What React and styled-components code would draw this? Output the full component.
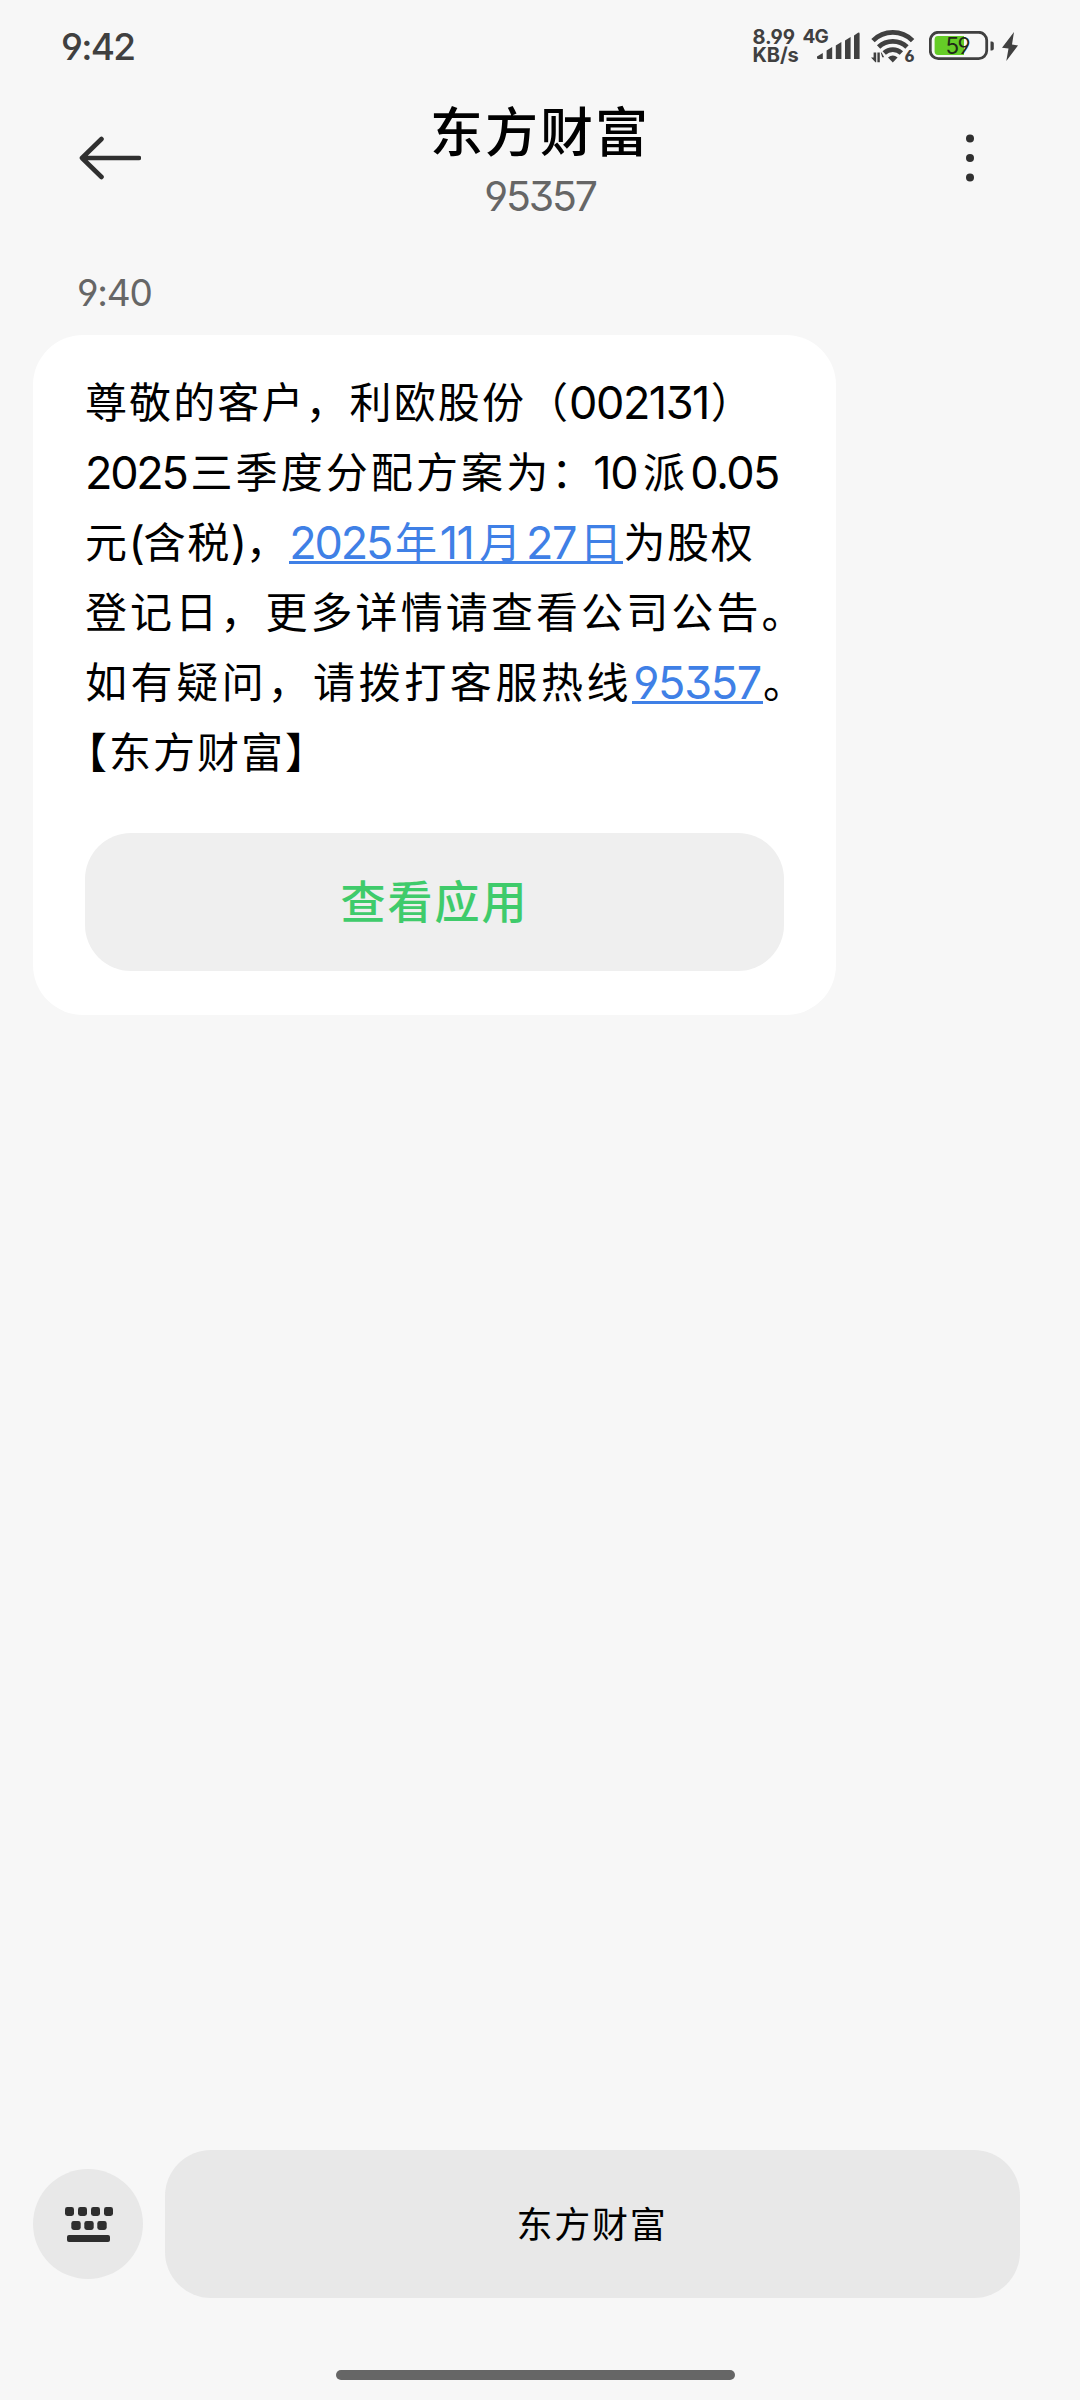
import React from "react";
import styled, { createGlobalStyle } from "styled-components";

const colors = {
  page: "#f7f7f7",
  bubble: "#ffffff",
  control: "#e8e8e8",
  action: "#efefef",
  text: "#000000",
  icon: "#303030",
  status: "#404040",
  muted: "#666666",
  link: "#3f80e6",
  green: "#3fcb6b",
  battery: "#65cc27",
};

const GlobalStyle = createGlobalStyle`
  * {
    box-sizing: border-box;
  }

  body {
    margin: 0;
    background: ${colors.page};
    font-family: Inter, "Noto Sans CJK SC", sans-serif;
    font-feature-settings: "cv03", "cv04", "cv09";
  }
`;

const Screen = styled.div`
  display: flex;
  flex-direction: column;
  width: 1080px;
  height: 2400px;
  background: ${colors.page};
  color: ${colors.text};
`;

const StatusBar = styled.div`
  display: flex;
  align-items: center;
  justify-content: space-between;
  height: 94px;
  padding: 0 62px 2px 61px;
  color: ${colors.status};
`;

const Clock = styled.span`
  font-size: 37px;
  font-weight: 500;
  letter-spacing: -1.7px;
`;

const StatusIcons = styled.div`
  display: flex;
  align-items: center;
`;

const NetSpeed = styled.div`
  width: 50px;
  margin-left: -1px;
  font-size: 20px;
  font-weight: 700;
  line-height: 18px;
  letter-spacing: -0.1px;
`;

const Network = styled.span`
  height: 36px;
  margin-right: -11px;
  font-size: 19px;
  font-weight: 700;
  line-height: 18px;
  letter-spacing: -0.8px;
`;

const StatusGap = styled.span`
  width: ${(props) => props.$width}px;
`;

const Header = styled.header`
  display: flex;
  align-items: center;
  justify-content: space-between;
  height: 130px;
  padding: 0 78px;
`;

const IconButton = styled.button`
  display: flex;
  align-items: center;
  justify-content: center;
  width: 64px;
  height: 64px;
  margin-top: -2px;
  padding: 0;
  border: 0;
  background: none;
`;

const Contact = styled.div`
  display: flex;
  flex-direction: column;
  align-items: center;
  padding-top: 4px;
`;

const ContactName = styled.h1`
  margin: 0;
  font-size: 53px;
  font-weight: 500;
  line-height: 70px;
  letter-spacing: 2px;
`;

const ContactNumber = styled.span`
  font-size: 41px;
  line-height: 56px;
  letter-spacing: -2.2px;
  color: ${colors.muted};
`;

const Thread = styled.main`
  display: flex;
  flex: 1;
  flex-direction: column;
  align-items: flex-start;
  padding: 44px 33px 0;
`;

const Timestamp = styled.time`
  height: 67px;
  margin-left: 44px;
  font-size: 37px;
  line-height: 49px;
  letter-spacing: -1.2px;
  color: ${colors.muted};
`;

const Bubble = styled.section`
  display: flex;
  flex-direction: column;
  width: 803px;
  height: 680px;
  padding: 33px 52px 44px;
  border-radius: 50px;
  background: ${colors.bubble};
`;

const Line = styled.div`
  display: flex;
  height: 70px;
  font-size: 42px;
  line-height: 70px;
  white-space: nowrap;
  letter-spacing: ${(props) => props.$spacing}px;
  margin-left: ${(props) => props.$indent || 0}px;
`;

const Latin = styled.span`
  font-size: 45px;
  letter-spacing: ${(props) => props.$spacing ?? -1.5}px;
  margin: 0 ${(props) => props.$after || 0}px 0 ${(props) => props.$before || 0}px;
`;

const Link = styled.a`
  display: flex;
  height: 56px;
  border-bottom: 3px solid ${colors.link};
  color: ${colors.link};
`;

const ActionButton = styled.button`
  height: 138px;
  margin-top: auto;
  padding: 0 0 6px;
  border: 0;
  border-radius: 46px;
  background: ${colors.action};
  color: ${colors.green};
  font-family: inherit;
  font-size: 45px;
  font-weight: 500;
  letter-spacing: 2px;
`;

const BottomBar = styled.footer`
  display: flex;
  align-items: center;
  gap: 22px;
  height: 148px;
  padding: 0 60px 0 33px;
`;

const KeyboardButton = styled.button`
  display: flex;
  align-items: center;
  justify-content: center;
  width: 110px;
  height: 110px;
  padding: 0 0 0 2px;
  border: 0;
  border-radius: 50%;
  background: ${colors.control};
`;

const MenuButton = styled.button`
  flex: 1;
  height: 148px;
  padding: 0 1px 4px 0;
  border: 0;
  border-radius: 46px;
  background: ${colors.control};
  color: ${colors.text};
  font-family: inherit;
  font-size: 36px;
  letter-spacing: 1.8px;
`;

const HomeArea = styled.div`
  display: flex;
  justify-content: center;
  height: 102px;
  padding: 72px 9px 0 0;
`;

const HomeIndicator = styled.div`
  width: 399px;
  height: 10px;
  border-radius: 5px;
  background: ${colors.muted};
`;

const SignalIcon = () => (
  <svg width="43" height="28" viewBox="0 0 43 28" fill={colors.status}>
    <path d="M0 24.5 5.8 21v6H1.2Q0 27 0 25.8Z" />
    <path d="M9.6 18.5 15.2 15v12H9.6Z" />
    <path d="M18.8 13.5 24.4 10v17H18.8Z" />
    <path d="M28 8.5 33.6 5v22H28Z" />
    <path d="M37 3.5 41 .8q1.6-.8 1.6 1V27H37Z" />
  </svg>
);

const WifiIcon = () => (
  <svg width="48" height="38" viewBox="0 -2 48 38">
    <g fill="none" stroke={colors.status} strokeWidth="4.8">
      <path d="M2 11.6a28 28 0 0 1 39.6 0" />
      <path d="M7.6 18a20.5 20.5 0 0 1 28.4 0" />
      <path d="M13.2 24a12.5 12.5 0 0 1 17.2 0" />
    </g>
    <path d="M17 28.5q4.800-3.800 9.600 0L21.800 33.400Z" fill={colors.status} />
    <path
      d="M0 28.500h2.600v-5h2.600v9.700H4.400ZM6.400 23.500h2.400v9.700H6.400ZM9.800 23.500h.8l2.600 4.700h-2Z"
      fill={colors.status}
    />
    <text
      x="33.5"
      y="33.2"
      fontSize="16"
      fontWeight="800"
      fill={colors.status}
      stroke={colors.page}
      strokeWidth="2"
      paintOrder="stroke"
    >
      6
    </text>
  </svg>
);

const BatteryIcon = () => (
  <svg width="66" height="30" viewBox="0 0 66 30">
    <rect
      x="1.3"
      y="1.3"
      width="56.4"
      height="26.4"
      rx="8"
      fill="none"
      stroke={colors.status}
      strokeWidth="2.8"
    />
    <path d="M61.5 10.5h1.3q2 0 2 2v5q0 2-2 2h-1.3Z" fill={colors.status} />
    <path d="M9 5h26v19H9q-3.4 0-3.4-3.4V8.4Q5.6 5 9 5Z" fill={colors.battery} />
    <text x="16.5" y="22.7" fontSize="22.5" letterSpacing="-1.6" fill="#1f2a18">
      59
    </text>
  </svg>
);

const BoltIcon = () => (
  <svg width="16" height="29" viewBox="0 0 16 29" fill={colors.status}>
    <path d="M12 0 0 15.8l6.500.7L4.300 29 16 13.400l-6-.9Z" />
  </svg>
);

const BackIcon = () => (
  <svg width="62" height="44" viewBox="0 0 62 44">
    <path
      d="M22.5 3 3 22l19.5 19M3.5 22H60"
      fill="none"
      stroke={colors.icon}
      strokeWidth="4.6"
      strokeLinecap="round"
      strokeLinejoin="round"
    />
  </svg>
);

const MoreIcon = () => (
  <svg width="10" height="48" viewBox="0 0 10 48" fill={colors.icon}>
    <circle cx="5" cy="4.5" r="4" />
    <circle cx="5" cy="24" r="4" />
    <circle cx="5" cy="43.5" r="4" />
  </svg>
);

const KeyboardIcon = () => (
  <svg width="48" height="35" viewBox="0 0 48 35" fill="#2e2e2e">
    {[0, 13, 26, 39].map((x) => (
      <rect key={x} x={x} y="0" width="9" height="9" rx="2.4" />
    ))}
    {[6.3, 19.3, 32.3].map((x) => (
      <rect key={x} x={x} y="14" width="9.4" height="9" rx="2.4" />
    ))}
    <rect x="2" y="28" width="43" height="7" rx="2" />
  </svg>
);

const Message = () => (
  <Bubble>
    <Line $spacing={2.1}>
      尊敬的客户，利欧股份（
      <Latin $before={-1} $after={2}>
        002131
      </Latin>
      ）
    </Line>
    <Line $spacing={3.1}>
      <Latin $spacing={-2.3} $after={4}>
        2025
      </Latin>
      三季度分配方案为：
      <Latin $before={-3} $after={6}>
        10
      </Latin>
      派<Latin $before={2}>0.05</Latin>
    </Line>
    <Line $spacing={1.6}>
      元<Latin>(</Latin>含税<Latin>)</Latin>，
      <Link>
        <Latin $spacing={-2.2} $after={4}>
          2025
        </Latin>
        年
        <Latin $before={1} $after={6}>
          11
        </Latin>
        月
        <Latin $before={3} $after={4}>
          27
        </Latin>
        日
      </Link>
      为股权
    </Line>
    <Line $spacing={3.1}>登记日，更多详情请查看公司公告。</Line>
    <Line $spacing={3.6}>
      如有疑问，请拨打客服热线
      <Link>
        <Latin $spacing={-1.3} $before={1} $after={2}>
          95357
        </Latin>
      </Link>
      。
    </Line>
    <Line $spacing={2} $indent={-20}>
      【东方财富】
    </Line>
    <ActionButton>查看应用</ActionButton>
  </Bubble>
);

const App = () => {
  return (
    <Screen>
      <GlobalStyle />
      <StatusBar>
        <Clock>9:42</Clock>
        <StatusIcons>
          <NetSpeed>
            8.99
            <br />
            KB/s
          </NetSpeed>
          <Network>4G</Network>
          <SignalIcon />
          <StatusGap $width={11} />
          <WifiIcon />
          <StatusGap $width={10} />
          <BatteryIcon />
          <StatusGap $width={7} />
          <BoltIcon />
        </StatusIcons>
      </StatusBar>
      <Header>
        <IconButton aria-label="返回">
          <BackIcon />
        </IconButton>
        <Contact>
          <ContactName>东方财富</ContactName>
          <ContactNumber>95357</ContactNumber>
        </Contact>
        <IconButton aria-label="更多">
          <MoreIcon />
        </IconButton>
      </Header>
      <Thread>
        <Timestamp>9:40</Timestamp>
        <Message />
      </Thread>
      <BottomBar>
        <KeyboardButton aria-label="键盘">
          <KeyboardIcon />
        </KeyboardButton>
        <MenuButton>东方财富</MenuButton>
      </BottomBar>
      <HomeArea>
        <HomeIndicator />
      </HomeArea>
    </Screen>
  );
};

export default App;
